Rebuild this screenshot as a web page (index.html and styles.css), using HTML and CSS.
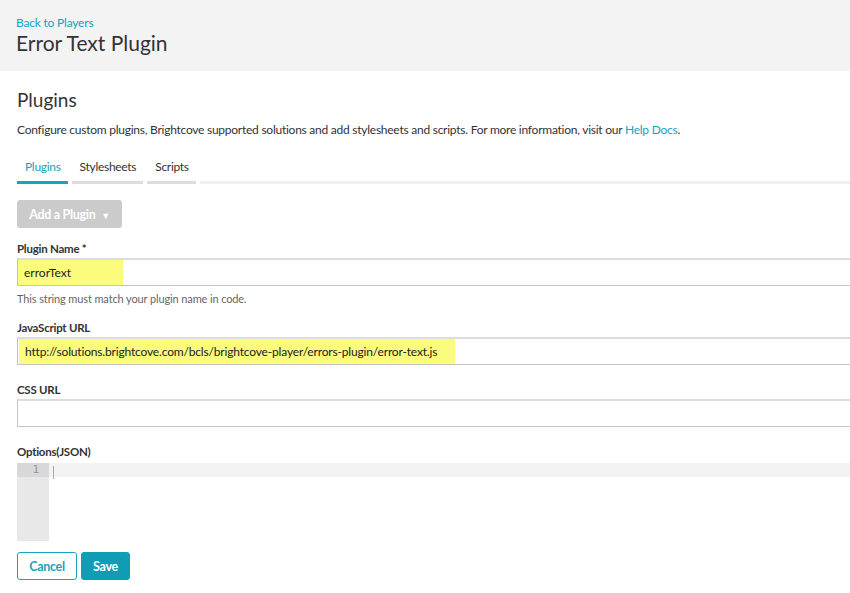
FILE: index.html
```html
<!DOCTYPE html>
<html>
<head>
<meta charset="utf-8">
<link rel="stylesheet" href="styles.css">
</head>
<body>
<header class="top">
  <a class="back" href="#">Back to Players</a>
  <h1 class="title">Error Text Plugin</h1>
</header>
<main class="content">
  <h2 class="section">Plugins</h2>
  <p class="desc">Configure custom plugins, Brightcove supported solutions and add stylesheets and scripts. For more information, visit our <a href="#" class="link">Help Docs</a>.</p>
  <nav class="tabs">
    <span class="tab active">Plugins</span>
    <span class="tab">Stylesheets</span>
    <span class="tab">Scripts</span>
    <span class="tab rest"></span>
  </nav>
  <button class="add">Add a Plugin <span class="caret">▼</span></button>
  <div class="field first">
    <label class="label">Plugin Name *</label>
    <div class="input"><span class="hl hl-name">errorText</span></div>
    <div class="help">This string must match your plugin name in code.</div>
  </div>
  <div class="field after-help">
    <label class="label">JavaScript URL</label>
    <div class="input"><span class="hl hl-url">http://solutions.brightcove.com/bcls/brightcove-player/errors-plugin/error-text.js</span></div>
  </div>
  <div class="field">
    <label class="label">CSS URL</label>
    <div class="input"></div>
  </div>
  <div class="field">
    <label class="label">Options(JSON)</label>
    <div class="editor">
      <div class="gutter"><div class="gline">1</div></div>
      <div class="code"><div class="cline"><span class="cursor"></span></div></div>
    </div>
  </div>
  <div class="actions">
    <button class="btn cancel">Cancel</button>
    <button class="btn save">Save</button>
  </div>
</main>
</body>
</html>
```
FILE: styles.css
```css
html, body {
  margin: 0;
  padding: 0;
  overflow: hidden;
}
body {
  font-family: Lato, "Open Sans", sans-serif;
  color: #333;
  background: #fff;
  width: 850px;
}
.top {
  background: #f3f3f3;
  height: 71px;
  box-sizing: border-box;
  padding: 15px 16px 0;
}
.back {
  display: block;
  color: #17a2bd;
  text-decoration: none;
  font-size: 12px;
  letter-spacing: -0.2px;
  line-height: 16px;
}
.title {
  margin: 0;
  font-weight: 400;
  font-size: 21px;
  line-height: 24px;
  color: #333;
}
.content {
  padding: 18px 0 0 17px;
}
.section {
  margin: 0;
  font-size: 19px;
  font-weight: 400;
  line-height: 22px;
  color: #333;
}
.desc {
  margin: 11px 0 0;
  font-size: 12px;
  letter-spacing: -0.25px;
  line-height: 16px;
  color: #333;
}
.link {
  color: #17a2bd;
  text-decoration: none;
}
.tabs {
  display: flex;
  gap: 4px;
  margin-top: 21px;
}
.tab {
  font-size: 12px;
  letter-spacing: -0.3px;
  line-height: 16px;
  padding: 0 7px 6px 8px;
  border-bottom: 3px solid #ddd;
  color: #333;
}
.tab.active {
  color: #17a2bd;
  border-bottom-color: #17a2bd;
}
.tab.rest {
  flex: 1;
  border-bottom-color: #efefef;
}
.add {
  display: block;
  margin-top: 16px;
  height: 28px;
  width: 105px;
  border: 0;
  border-radius: 3px;
  background: #cbcbcb;
  color: #fff;
  font-family: inherit;
  font-weight: 700;
  font-size: 12.5px;
  letter-spacing: -0.3px;
  padding: 0;
}
.caret {
  font-size: 9px;
  margin-left: 3px;
}
.field {
  margin-top: 18px;
}
.field.first {
  margin-top: 14px;
}
.field.after-help {
  margin-top: 15px;
}
.label {
  display: block;
  font-size: 11.5px;
  letter-spacing: -0.25px;
  font-weight: 700;
  line-height: 14px;
  color: #333;
  margin-bottom: 2px;
}
.input {
  height: 28px;
  width: 850px;
  box-sizing: border-box;
  border: 1px solid #c4c4c4;
  border-top: 2px solid #ddd;
  display: flex;
  align-items: stretch;
}
.hl {
  background: #fbfb7c;
  font-size: 12px;
  display: flex;
  align-items: center;
  padding-left: 6px;
  color: #222;
  white-space: nowrap;
}
.hl-name { width: 99px; }
.hl-url { width: 430px; margin-left: 1px; letter-spacing: -0.17px; }
.help {
  font-size: 11px;
  letter-spacing: -0.12px;
  color: #666;
  margin-top: 6px;
  line-height: 14px;
}
.editor {
  display: flex;
  height: 78px;
  margin-top: 4px;
}
.gutter {
  width: 32px;
  background: #e8e8e8;
}
.gline {
  height: 14px;
  background: #d8d8d8;
  color: #999;
  font-family: "DejaVu Sans Mono", monospace;
  font-size: 11px;
  line-height: 14px;
  text-align: right;
  padding-right: 10px;
}
.code {
  flex: 1;
}
.cline {
  height: 14px;
  background: #f3f3f3;
  padding-left: 4px;
}
.cursor {
  display: inline-block;
  width: 1px;
  height: 13px;
  margin-top: 1px;
  background: #aaa;
}
.actions {
  display: flex;
  gap: 4px;
  margin-top: 11px;
}
.btn {
  height: 28px;
  border-radius: 3px;
  font-family: inherit;
  font-weight: 700;
  font-size: 12.5px;
  letter-spacing: -0.3px;
  padding: 0;
}
.cancel {
  width: 60px;
  background: #fff;
  border: 1px solid #17a2bd;
  color: #17a2bd;
}
.save {
  width: 49px;
  background: #0e9db5;
  border: 1px solid #0e9db5;
  color: #fff;
}
```
